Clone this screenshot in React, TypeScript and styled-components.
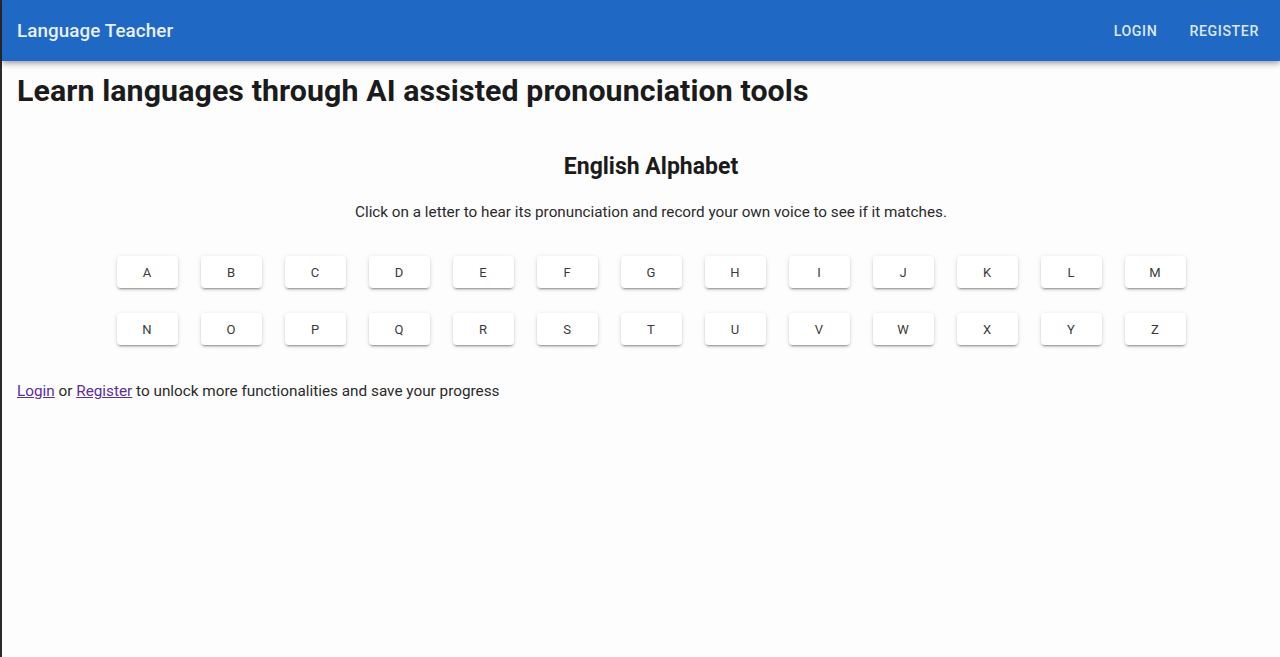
import React from "react";
import styled, { createGlobalStyle } from "styled-components";

const Global = createGlobalStyle`
  html, body { margin: 0; padding: 0; background: #fdfdfd; }
  body { font-family: Roboto, "Liberation Sans", Arial, sans-serif; color: #1a1a1a; }
  * { box-sizing: border-box; }
`;

const Frame = styled.div`
  min-height: 657px;
  border-left: 2px solid #2b2b2b;
  background: #fdfdfd;
`;

const AppBar = styled.header`
  height: 61px;
  background: #1f69c5;
  display: flex;
  align-items: center;
  justify-content: space-between;
  padding: 0 12px 0 15px;
  box-shadow: 0 2px 4px -1px rgba(0,0,0,0.2), 0 4px 5px 0 rgba(0,0,0,0.14), 0 1px 10px 0 rgba(0,0,0,0.12);
  position: relative;
  z-index: 1;
`;

const Title = styled.div`
  color: #e8f0fb;
  font-size: 18.8px;
  font-weight: 500;
  letter-spacing: 0.1px;
`;

const Nav = styled.nav`
  display: flex;
  gap: 14px;
`;

const NavButton = styled.button`
  background: none;
  border: none;
  color: #dbe7f7;
  font-family: inherit;
  font-size: 14.2px;
  font-weight: 500;
  letter-spacing: 0.6px;
  text-transform: uppercase;
  padding: 6px 9px;
  cursor: pointer;
`;

const Main = styled.main`
  padding: 13px 15px 0 15px;
`;

const Heading = styled.h1`
  margin: 0;
  font-size: 30.3px;
  font-weight: 700;
  line-height: 34px;
  letter-spacing: 0.1px;
  color: #1b1b1b;
`;

const Section = styled.section`
  padding-left: 20px;
  display: flex;
  flex-direction: column;
  align-items: center;
`;

const SubHeading = styled.h2`
  margin: 45px 0 0;
  font-size: 23px;
  font-weight: 700;
  line-height: 28px;
  color: #1b1b1b;
`;

const Lead = styled.p`
  margin: 21px 0 0;
  font-size: 15.25px;
  line-height: 20px;
  color: #2a2a2a;
`;

const LetterGrid = styled.div`
  margin-top: 34px;
  display: grid;
  grid-template-columns: repeat(13, 61px);
  column-gap: 23px;
  row-gap: 25px;
`;

const LetterButton = styled.button`
  height: 32px;
  background: #fff;
  border: none;
  border-radius: 4px;
  font-family: inherit;
  font-size: 13px;
  font-weight: 400;
  color: #3a3a3a;
  box-shadow: 0 3px 1px -2px rgba(0,0,0,0.2), 0 2px 2px 0 rgba(0,0,0,0.14), 0 1px 5px 0 rgba(0,0,0,0.12);
  cursor: pointer;
`;

const Footer = styled.p`
  margin: 36px 0 0;
  font-size: 15.3px;
  line-height: 20px;
  color: #2a2a2a;
`;

const Link = styled.a`
  color: #5b2fa0;
  text-decoration: underline;
`;

const letters = "ABCDEFGHIJKLMNOPQRSTUVWXYZ".split("");

export default function App() {
  return (
    <Frame>
      <Global />
      <AppBar>
        <Title>Language Teacher</Title>
        <Nav>
          <NavButton>Login</NavButton>
          <NavButton>Register</NavButton>
        </Nav>
      </AppBar>
      <Main>
        <Heading>Learn languages through AI assisted pronounciation tools</Heading>
        <Section>
          <SubHeading>English Alphabet</SubHeading>
          <Lead>Click on a letter to hear its pronunciation and record your own voice to see if it matches.</Lead>
          <LetterGrid>
            {letters.map((l) => (
              <LetterButton key={l}>{l}</LetterButton>
            ))}
          </LetterGrid>
        </Section>
        <Footer>
          <Link href="#">Login</Link> or <Link href="#">Register</Link> to unlock more functionalities and save your progress
        </Footer>
      </Main>
    </Frame>
  );
}
